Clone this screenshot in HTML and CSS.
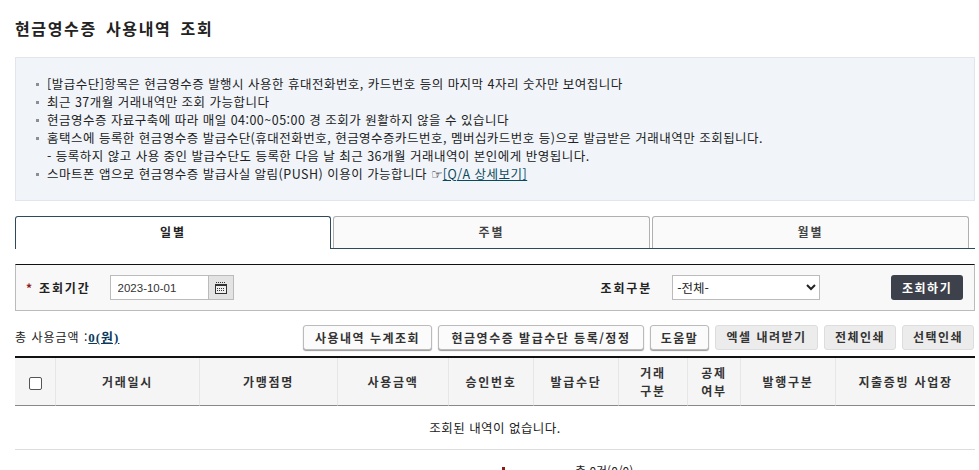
FILE: index.html
```html
<!DOCTYPE html>
<html lang="ko">
<head>
<meta charset="utf-8">
<title>현금영수증 사용내역 조회</title>
<link rel="stylesheet" href="styles.css">
</head>
<body>
<div class="page">
  <h1 class="title">현금영수증 사용내역 조회</h1>
  <div class="notice">
    <ul class="notice-list">
      <li>[발급수단]항목은 현금영수증 발행시 사용한 휴대전화번호, 카드번호 등의 마지막 4자리 숫자만 보여집니다</li>
      <li>최근 37개월 거래내역만 조회 가능합니다</li>
      <li>현금영수증 자료구축에 따라 매일 04:00~05:00 경 조회가 원활하지 않을 수 있습니다</li>
      <li>홈택스에 등록한 현금영수증 발급수단(휴대전화번호, 현금영수증카드번호, 멤버십카드번호 등)으로 발급받은 거래내역만 조회됩니다.</li>
      <li class="plain">- 등록하지 않고 사용 중인 발급수단도 등록한 다음 날 최근 36개월 거래내역이 본인에게 반영됩니다.</li>
      <li>스마트폰 앱으로 현금영수증 발급사실 알림(PUSH) 이용이 가능합니다 <span class="finger">☞</span><a class="qa" href="#">[Q/A 상세보기]</a></li>
    </ul>
  </div>
  <div class="tabs">
    <div class="tab active">일별</div>
    <div class="tab">주별</div>
    <div class="tab">월별</div>
  </div>
  <div class="search">
    <span class="req">*</span>
    <label class="lbl">조회기간</label>
    <div class="datebox">
      <input class="date" type="text" value="2023-10-01">
      <button class="cal" type="button" aria-label="달력">
        <svg width="12" height="12" viewBox="0 0 12 12"><path d="M1 0h1v1H1zM3 0h1v1H3zM5 0h1v1H5zM7 0h1v1H7zM9 0h1v1H9z" fill="#333"/><rect x=".5" y="2.500" width="11" height="9" fill="#eee" stroke="#333"/><path d="M1 3h10v1H1z" fill="#333"/><path d="M2 6.500h8M2 8.500h8" stroke="#333" stroke-dasharray="1 1" fill="none"/></svg>
      </button>
    </div>
    <label class="lbl lbl2">조회구분</label>
    <select class="sel"><option>-전체-</option></select>
    <button class="go" type="button">조회하기</button>
  </div>
  <div class="actions">
    <div class="total">총 사용금액 :<a class="sum" href="#">0(원)</a></div>
    <div class="btns">
      <button class="btn w b1" type="button">사용내역 누계조회</button>
      <button class="btn w b2" type="button">현금영수증 발급수단 등록/정정</button>
      <button class="btn w b3" type="button">도움말</button>
      <button class="btn g b4" type="button">엑셀 내려받기</button>
      <button class="btn g b5" type="button">전체인쇄</button>
      <button class="btn g b5" type="button">선택인쇄</button>
    </div>
  </div>
  <table class="grid">
    <colgroup>
      <col class="c1"><col class="c2"><col class="c3"><col class="c4"><col class="c5"><col class="c6"><col class="c7"><col class="c8"><col class="c9"><col class="c10">
    </colgroup>
    <thead>
      <tr>
        <th><span class="chk"></span></th>
        <th>거래일시</th><th>가맹점명</th><th>사용금액</th><th>승인번호</th><th>발급수단</th>
        <th>거래<br>구분</th><th>공제<br>여부</th><th>발행구분</th><th>지출증빙 사업장</th>
      </tr>
    </thead>
    <tbody>
      <tr><td colspan="10">조회된 내역이 없습니다.</td></tr>
    </tbody>
  </table>
  <div class="foot"><span class="foot-mark"></span><span class="foot-text">총 0건(0/0)</span></div>
</div>
</body>
</html>
```
FILE: styles.css
```css
* { box-sizing: border-box; }
html, body { margin: 0; padding: 0; background: #fff; overflow: hidden; }
body { height: 470px; font-family: "Noto Sans CJK KR", "Liberation Sans", sans-serif; color: #222; font-size: 12px; }
.page { width: 960px; margin-left: 15px; }
.title { margin: 0; padding-top: 17px; height: 57px; font-size: 16px; line-height: 22px; font-weight: 700; color: #222; letter-spacing: 1.65px; word-spacing: 3px; }
.notice { height: 144px; background: #f1f5fa; border: 1px solid #e2e5ea; padding: 17px 0 0 19px; }
.notice-list { list-style: none; margin: 0; padding: 0; line-height: 18px; font-size: 12.5px; letter-spacing: .48px; }
.notice-list li { padding-left: 12px; position: relative; white-space: nowrap; }
.notice-list li::before { content: ""; position: absolute; left: 1px; top: 8px; width: 3px; height: 3px; background: #8a8f96; }
.notice-list li.plain::before { display: none; }
.finger { font: 700 13px "DejaVu Sans", sans-serif; letter-spacing: 0; color: #111; }
.qa { color: #0b4a5c; text-decoration: underline; }
.tabs { display: flex; margin-top: 15px; height: 33px; border-bottom: 1px solid #2d4a5a; gap: 2px; }
.tab { width: 317px; height: 32px; background: #fafafa; border: 1px solid #b0b0b0; border-bottom: 0; border-radius: 3px 3px 0 0; text-align: center; line-height: 29px; font-weight: 700; color: #444; letter-spacing: 2px; }
.tab.active { width: 316px; height: 33px; background: #fff; border-color: #2d4a5a; color: #222; }
.search { display: flex; align-items: center; height: 47px; margin-top: 15px; background: #f8f8f8; border-top: 1px solid #111; border-left: 1px solid #bbb; border-bottom: 1px solid #bbb; border-right: 1px solid #bbb; padding-left: 10px; }
.req { color: #8c1c1c; font-weight: 700; width: 13px; }
.lbl { font-weight: 700; color: #222; letter-spacing: 1.85px; }
.datebox { display: flex; margin-left: 19px; }
.date { width: 99px; height: 25px; border: 1px solid #bbb; padding: 0 7px; font: 11.5px "Liberation Sans", sans-serif; color: #333; background: #fff; }
.cal { width: 25px; height: 25px; border: 1px solid #bbb; border-left: 0; background: #e3e3e3; padding: 0; display: flex; align-items: center; justify-content: center; }
.lbl2 { margin-left: 367px; }
.sel { width: 148px; height: 25px; margin-left: 20px; border: 1px solid #bbb; background: #fff; font: 12.5px "Noto Sans CJK KR", sans-serif; color: #222; }
.go { margin-left: 71px; width: 72px; height: 25px; background: #3d414b; color: #fff; border: 0; border-radius: 3px; font: 700 12px "Noto Sans CJK KR", sans-serif; letter-spacing: 1.5px; }
.actions { display: flex; justify-content: space-between; align-items: flex-start; height: 31px; margin-top: 14px; }
.total { margin-top: 2px; line-height: 20px; color: #222; letter-spacing: 1px; }
.sum { color: #0b3a5c; font-weight: 700; font-size: 13px; text-decoration: underline; font-family: "Liberation Serif", "Noto Sans CJK KR", serif; }
.btns { display: flex; gap: 6px; margin-right: 1px; }
.btn { height: 25px; padding: 0; border-radius: 3px; font: 700 12px "Noto Sans CJK KR", sans-serif; color: #333; letter-spacing: 1.5px; white-space: nowrap; }
.btn.w { background: #fbfbfb; border: 1px solid #bbb; box-shadow: 0 1px 1px #999; }
.btn.g { background: #ececec; border: 1px solid #ddd; padding-bottom: 3px; }
.b1 { width: 129px; }
.b2 { width: 206px; }
.b3 { width: 59px; }
.b4 { width: 103px; }
.b5 { width: 72px; }
.grid { width: 960px; border-collapse: separate; border-spacing: 0; table-layout: fixed; border-top: 2px solid #111; }
.c1 { width: 40px; } .c2 { width: 144px; } .c3 { width: 138px; } .c4 { width: 111px; } .c5 { width: 85px; }
.c6 { width: 85px; } .c7 { width: 69px; } .c8 { width: 53px; } .c9 { width: 95px; } .c10 { width: 140px; }
.grid th { height: 48px; background: #f5f5f5; border-bottom: 1px solid #888; border-left: 1px solid #e6e6e6; font-weight: 700; line-height: 18px; padding: 0; color: #333; letter-spacing: 1.7px; }
.grid th:first-child { border-left: 0; }
.chk { display: inline-block; width: 13px; height: 13px; border: 1px solid #555; border-radius: 2px; background: #fff; vertical-align: middle; }
.grid td { height: 44px; text-align: center; border-bottom: 1px solid #ddd; color: #222; font-size: 12.500px; letter-spacing: .45px; }
.foot { position: relative; height: 30px; margin-top: 12px; }
.foot-mark { position: absolute; left: 487px; top: 5px; width: 3px; height: 8px; background: #8c1c1c; }
.foot-text { position: absolute; left: 560px; top: 0; letter-spacing: 0; }
```
